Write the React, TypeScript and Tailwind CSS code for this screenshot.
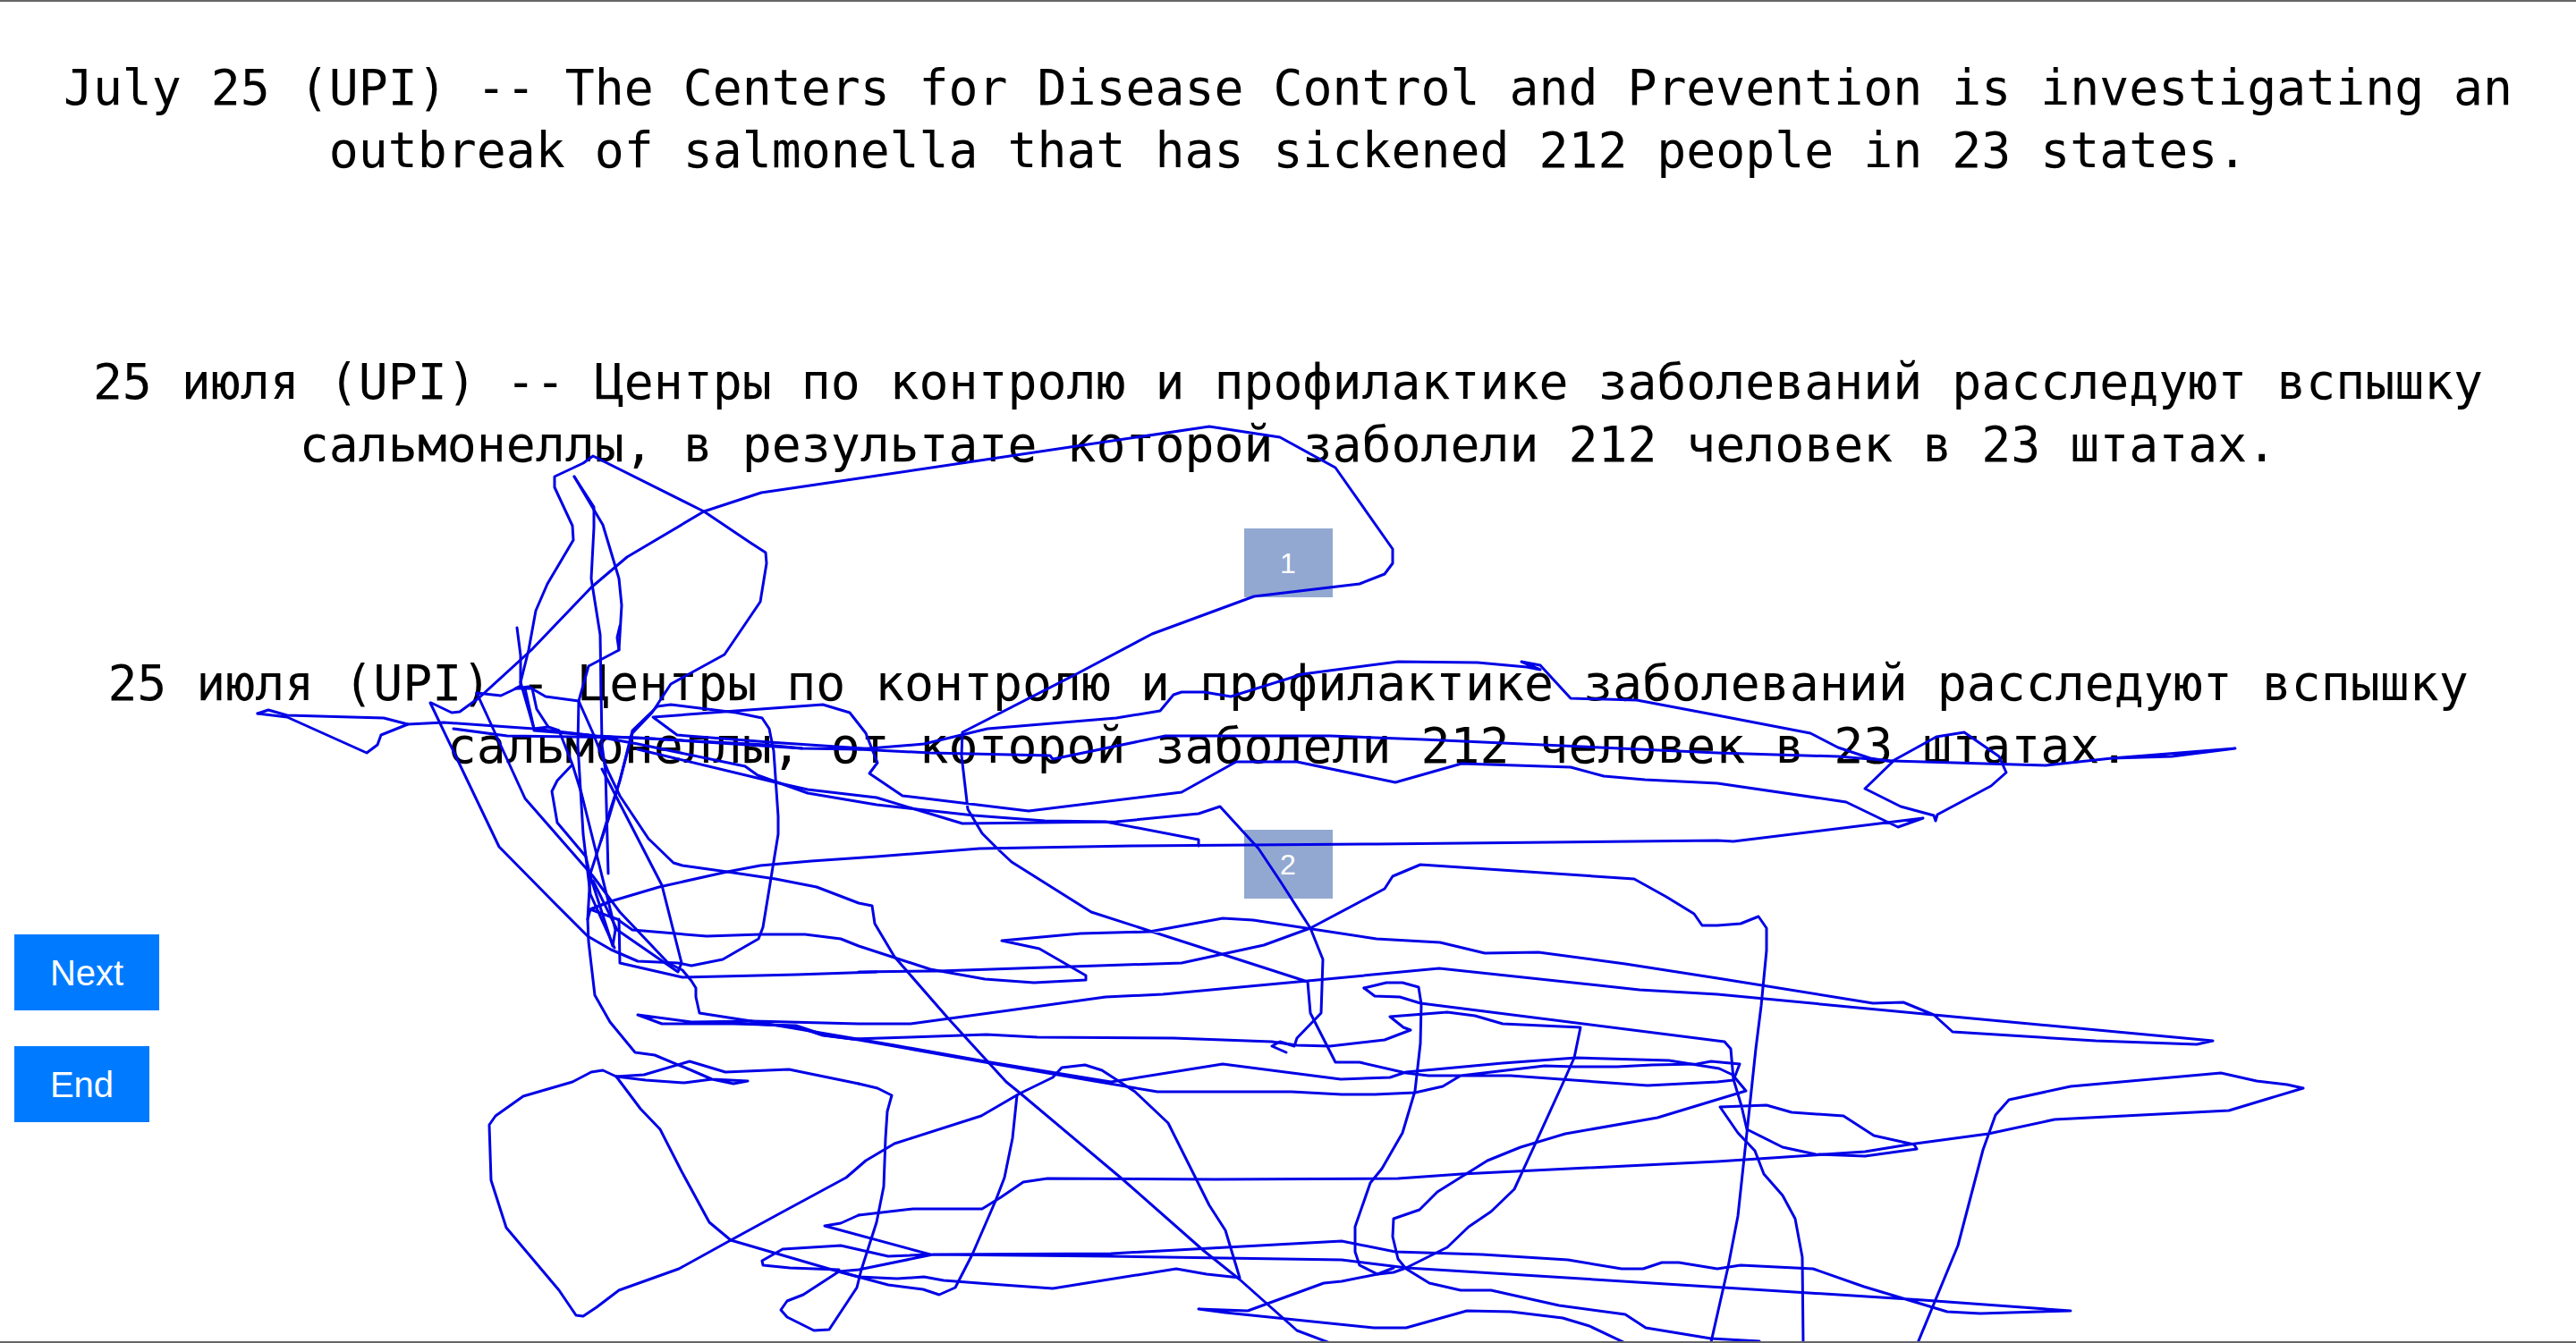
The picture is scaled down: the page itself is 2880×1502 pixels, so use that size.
const traces = [
  // big loop, top left
  "578,702 582,733 582,767 576,770 591,768 610,779 647,784 663,820 680,863 693,890 725,938 753,965 763,968 813,975 867,983 913,992 960,1010 975,1013 978,1033 1000,1070 1061,1140 1125,1210 1141,1223 1254,1318 1346,1399 1386,1431 1450,1488 1487,1502",
  "597,815 582,763 591,727 599,683 612,653 641,604 640,588 620,545 620,533 652,518 663,510 787,572 839,607 856,618 857,630 850,673 810,732 750,765 729,797 707,820 693,873 680,913 672,940 660,977 657,1028 658,1053 665,1113 682,1143 710,1177 732,1180 773,1197 796,1207 820,1212 836,1209 796,1207 765,1211 722,1208 689,1204",
  "482,786 505,797 514,796 536,780 594,727 661,657 701,623 787,572 851,551 960,535 1352,477 1431,489 1493,523 1557,614 1557,630 1548,642 1520,653 1402,667 1288,709 1205,753 1076,819 1075,845 1082,905 1098,932 1116,950 1131,964 1220,1020 1462,1098 1465,1133 1493,1188 1520,1188 1572,1200 1597,1203 1689,1203 1842,1214 1920,1210 1938,1208 1940,1203 1945,1190 1913,1187 1897,1190 1847,1191 1808,1193 1760,1193 1727,1192 1633,1203 1613,1215 1582,1222 1537,1224 1500,1224 1444,1221 1294,1221 1229,1210 1107,1189 960,1163 923,1158 890,1147 820,1145 740,1145 713,1135 773,1143 842,1142 960,1145 1018,1145 1128,1130 1236,1115 1300,1112 1462,1097 1609,1083 1833,1107 1920,1112 2162,1135 2474,1164 2456,1168 2343,1164 2183,1154 2162,1135 2128,1121 2094,1122 1920,1094 1817,1078 1720,1065 1660,1066 1610,1054 1539,1050 1401,1029 1367,1027 1285,1042 1208,1044 1120,1052 1162,1061 1214,1091 1214,1096 1156,1099 1101,1095 1040,1084 960,1058 940,1050 900,1045 850,1045 790,1047 707,1040 690,1028 660,1017 683,1008 737,992 813,975 850,968 907,963 980,958 1095,949 1266,946 1539,944 1920,940 1938,941 2150,915 2122,925 2064,897 1920,876 1839,872 1793,868 1756,858 1634,854 1560,875 1450,852 1382,852 1321,886 1150,907 1009,890 972,865 981,853 975,838 968,820 950,797 920,788 823,795 730,802 757,822 860,830 980,838",
  // scribble left of the third paragraph
  "288,798 300,794 321,800 429,803 456,810 496,808 597,815 667,823 857,833 897,837 960,838 1033,832 1104,815 1248,803 1297,795 1312,777 1321,774 1346,774 1376,779 1456,754 1563,740 1652,741 1707,746 1722,749 1701,740 1722,744 1756,781 1830,783 1920,800 2024,820 2055,836 2091,848 2116,852 2085,882 2125,902 2162,912 2164,918 2166,911 2226,879 2243,864 2235,846 2196,819 2165,824 2116,851",
  "288,798 321,802 410,842 422,833 426,822 456,810",
  "960,838 1040,842 1174,845 1177,849 1303,823 1487,823 1591,827 1920,842 2055,846 2116,851 2287,856 2361,848 2499,837 2428,846 2361,848",
  "507,815 567,823 713,825 897,837",
  "597,817 657,822 713,832 833,857 847,867 903,887 980,900 1089,912 1168,918 1236,919 1340,939 1340,946",
  "713,838 867,875 903,883 980,892 1076,921 1248,919 1340,910 1364,902 1407,949 1431,985 1465,1038 1479,1073 1477,1133 1450,1161 1447,1170 1431,1165 1422,1170 1438,1177",
  // lower middle tangle
  "481,786 558,947 620,1010 657,1047 683,1062 713,1075 758,1077 773,1080 808,1073 848,1050 853,1037 870,933 870,913 865,840 860,815 852,803 823,797 750,788 735,790 707,817 693,873 680,917 672,940",
  "533,775 560,778 577,770 595,770 600,793 613,813 625,817 640,855 623,873 617,885 623,920 655,958 660,980 685,1058 688,1040 650,887 640,855",
  "533,775 587,893 663,980 693,1020 747,1077 763,1085 773,1097 778,1105 778,1115 782,1133 840,1142",
  "642,533 664,567 664,590 661,647 671,710 673,833 677,863 680,977",
  "693,700 690,713 692,727 658,745 647,784 646,833 652,933 660,1000 687,1060",
  "642,533 674,587 692,647 695,677 692,727",
  "587,770 597,815 613,813",
  "673,860 740,990 762,1077 758,1087 690,1040 663,985",
  "683,1008 660,1017 657,1028",
  "980,1087 890,1090 763,1093 693,1077 692,1028",
  "960,1087 1049,1086 1321,1077 1413,1057 1465,1038 1548,994 1557,980 1588,967 1827,983 1863,1003 1894,1022 1903,1035 1920,1035 1946,1033 1966,1025 1975,1038 1975,1063 1969,1125 1963,1173 1953,1267 1943,1360 1932,1417 1913,1501",
  "960,1212 882,1196 811,1199 771,1187 720,1202 689,1204 674,1197 661,1199 640,1210 585,1226 554,1248 547,1258 549,1320 566,1373 625,1443 644,1471 652,1472 667,1462 692,1443 759,1419 817,1387 872,1357 946,1317 968,1298 1000,1279 1097,1248 1140,1223 1177,1205 1187,1194 1213,1191 1232,1197 1269,1221 1306,1256 1352,1348 1370,1376 1386,1429 1349,1425 1315,1419 1177,1441 1107,1436 1055,1432 1033,1428 1003,1430 960,1428 938,1422",
  "689,1204 716,1240 738,1263 762,1310 793,1367 817,1387 937,1422 993,1437 1032,1442 1050,1448 1068,1440 1087,1403 1113,1343 1123,1317 1132,1273 1137,1225",
  "960,1212 981,1217 997,1225 992,1243 990,1273 988,1327 980,1367 963,1420 958,1440 927,1487 910,1488 880,1473 873,1465 880,1455 898,1448 938,1422 960,1420 1043,1403 1242,1402 1500,1388 1560,1400 1657,1403 1753,1409 1813,1419 1837,1419 1858,1412 1877,1412 1920,1419 1946,1415 2027,1419 2084,1439 2177,1467 2214,1469 2315,1466 2150,1454 1927,1440 1573,1418 1500,1409 1242,1405 1043,1403 993,1405 940,1393 875,1397 852,1410 853,1415 883,1418 938,1420",
  "840,1145 890,1148 920,1158 953,1162 1017,1160 1103,1157 1160,1160 1312,1161 1422,1165 1450,1169 1487,1170 1548,1163 1577,1152 1569,1149 1554,1137 1618,1132 1649,1136 1680,1145 1767,1149 1760,1183 1748,1210 1717,1278 1693,1330 1667,1355 1642,1372 1618,1395 1572,1418 1558,1423 1540,1425 1500,1433 1480,1435 1395,1466 1340,1464 1370,1468 1536,1485 1572,1485 1640,1466 1689,1467 1747,1474 1777,1483 1817,1502",
  "840,1142 1000,1169 1107,1188 1242,1210 1367,1190 1499,1207 1554,1205 1572,1199 1680,1189 1762,1183 1866,1186 1922,1195 1937,1202 1952,1220 1853,1250 1750,1268 1700,1283 1663,1298 1607,1333 1587,1353 1558,1363 1557,1383 1563,1408 1572,1419 1598,1435 1633,1443 1667,1443 1743,1460 1817,1470 1840,1485 1913,1497 1967,1500",
  "1525,1105 1550,1099 1568,1099 1586,1104 1589,1123 1588,1167 1582,1220 1568,1267 1545,1307 1532,1323 1515,1372 1515,1400 1520,1415 1540,1425 1558,1418",
  "1525,1105 1537,1114 1565,1115 1588,1122 1928,1165 1935,1173 1938,1207 1947,1237 1953,1263 1993,1283 2030,1291 2085,1293 2143,1285 2140,1280 2095,1270 2061,1248 2003,1244 1975,1236 1923,1238 1943,1267 1962,1287 1972,1313 1993,1337 2007,1363 2015,1406 2016,1502",
  "960,1359 1021,1352 1098,1352 1119,1339 1144,1322 1171,1318 1358,1319 1563,1318 1634,1313 1920,1299 2085,1288 2134,1280 2223,1268 2297,1252 2492,1242 2575,1217 2557,1213 2523,1209 2483,1200 2315,1215 2246,1230 2231,1247 2217,1286 2189,1393 2144,1502",
  "960,1359 940,1368 922,1371 1040,1403",
];

export default function App() {
  return (
    <div className="relative box-border h-[1502px] overflow-hidden border-y-2 border-y-[#666666] bg-white font-['Liberation_Sans',Arial,sans-serif]">
      <p className="px-4 pt-[61px] text-center font-['DejaVu_Sans_Mono',monospace] text-[54.8px] leading-[70px] text-black">
        July 25 (UPI) -- The Centers for Disease Control and Prevention is investigating an outbreak of salmonella that has sickened 212 people in 23 states.
      </p>
      <p className="mt-[189px] px-4 text-center font-['DejaVu_Sans_Mono',monospace] text-[54.8px] leading-[70px] text-black">
        25 июля (UPI) -- Центры по контролю и профилактике заболеваний расследуют вспышку сальмонеллы, в результате которой заболели 212 человек в 23 штатах.
      </p>
      <div className="mx-auto mt-[59px] flex h-[77px] w-[99px] items-center justify-center bg-[#92a8d1] text-[32px] text-white">1</div>
      <p className="mt-[61px] px-4 text-center font-['DejaVu_Sans_Mono',monospace] text-[54.8px] leading-[70px] text-black">
        25 июля (UPI) - Центры по контролю и профилактике заболеваний расследуют вспышку сальмонеллы, от которой заболели 212 человек в 23 штатах.
      </p>
      <div className="mx-auto mt-[59px] flex h-[77px] w-[99px] items-center justify-center bg-[#92a8d1] text-[32px] text-white">2</div>
      <div className="mt-10 flex flex-col items-start gap-10 pl-4">
        <button className="h-[85px] w-[162px] bg-[#007bff] text-[40px] text-white">Next</button>
        <button className="h-[85px] w-[151px] bg-[#007bff] text-[40px] text-white">End</button>
      </div>
      {/* handwritten trace drawn over the page */}
      <svg className="absolute top-[-2px] left-0 h-[1502px] w-[2880px]" viewBox="0 0 2880 1502" fill="none">
        {traces.map((points, i) => (
          <polyline key={i} points={points} stroke="#0000e6" strokeWidth="3" strokeLinejoin="round" strokeLinecap="round" />
        ))}
      </svg>
    </div>
  );
}
